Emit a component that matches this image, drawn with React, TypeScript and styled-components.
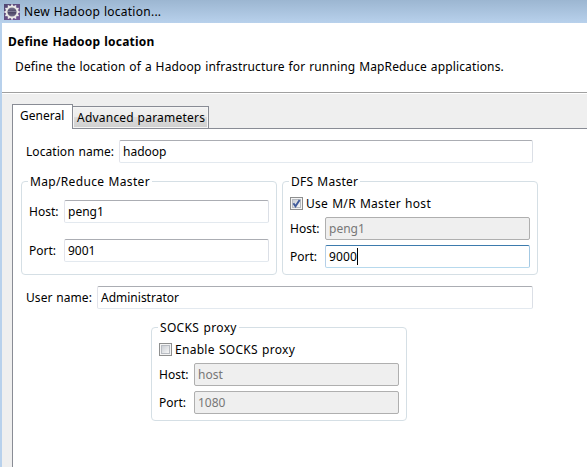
import React from "react";
import styled, { createGlobalStyle, css } from "styled-components";

const GlobalStyle = createGlobalStyle`
  *, *::before, *::after { box-sizing: border-box; }
  html, body { margin: 0; padding: 0; overflow: hidden; }
  body { background: #fff; }
`;

const Dialog = styled.div`
  width: 587px;
  height: 467px;
  display: flex;
  flex-direction: column;
  overflow: hidden;
  background: #b8d1ec;
  font: 12px/23px "Noto Sans", "Open Sans", sans-serif;
  color: #000;
`;

const TitleBar = styled.header`
  flex: none;
  height: 23px;
  padding-left: 4px;
  display: flex;
  align-items: center;
  gap: 4px;
  background: linear-gradient(#9cb6d1, #b8d1ec);
`;

const Text = styled.span<{ $track?: number; $word?: number; $bold?: boolean }>`
  white-space: nowrap;
  letter-spacing: ${(p) => p.$track ?? 0}px;
  word-spacing: ${(p) => p.$word ?? 0}px;
  font-weight: ${(p) => (p.$bold ? 700 : 400)};
`;

const Client = styled.div`
  flex: 1;
  margin-left: 2px;
  display: flex;
  flex-direction: column;
  background: #efefef;
`;

const Banner = styled.section`
  flex: none;
  height: 70px;
  padding: 7px 0 0 6px;
  display: flex;
  flex-direction: column;
  gap: 2px;
  background: #fff;
  border-bottom: 1px solid #a0a0a0;
`;

const Description = styled.div`
  padding-left: 7px;
`;

const TabFolder = styled.div`
  flex: 1;
  margin-left: 10px;
  display: flex;
  flex-direction: column;
`;

const Highlight = styled.div`
  flex: none;
  height: 1px;
  margin-bottom: 10px;
  margin-left: -10px;
  background: #fff;
`;

const TabRow = styled.div`
  flex: none;
  height: 25px;
  display: flex;
  align-items: flex-end;
`;

const Tab = styled.div<{ $active?: boolean }>`
  border: 1px solid #898c95;
  ${(p) =>
    p.$active
      ? css`
          width: 61px;
          height: 25px;
          padding-left: 7px;
          border-bottom: 0;
          background: #fff;
          line-height: 22px;
        `
      : css`
          width: 136px;
          height: 23px;
          padding-left: 4px;
          border-left: 0;
          line-height: 22px;
          background: linear-gradient(#f2f2f2 0%, #ebebeb 50%, #dcdcdc 50%, #cfcfcf 100%);
          box-shadow: inset 0 0 0 1px #f5f5f5;
        `}
`;

const TabRule = styled.div`
  flex: 1;
  border-bottom: 1px solid #898c95;
`;

const Panel = styled.form`
  flex: 1;
  padding: 11px 0 0 8px;
  border-left: 1px solid #898c95;
  background: #fff;
`;

const Field = styled.label<{ $label: number }>`
  display: grid;
  grid-template-columns: ${(p) => p.$label}px 1fr;
  height: 23px;
`;

const WideField = styled(Field)`
  width: 507px;
  margin-left: 5px;
`;

const Input = styled.input`
  width: 100%;
  min-width: 0;
  height: 23px;
  padding: 0 0 0 3px;
  outline: 0;
  border: 1px solid;
  border-color: #abadb3 #dbdfe6 #e3e9ef #e2e3ea;
  border-radius: 2px;
  background: #fff;
  color: #000;
  font: inherit;
  &:disabled {
    border-color: #afafaf;
    background: #efefef;
    color: #777;
  }
`;

const CaretInput = styled.div`
  display: flex;
  align-items: center;
  height: 23px;
  padding-left: 3px;
  border: 1px solid;
  border-color: #3d7bad #a4c9e3 #b7d9ed #b5cfe7;
  border-radius: 2px;
  background: #fff;
  line-height: 21px;
`;

const Caret = styled.i`
  width: 1px;
  height: 17px;
  background: #000;
`;

const Groups = styled.div`
  display: flex;
  gap: 5px;
  margin: 10px 0 11px;
  padding-top: 8px;
`;

const Group = styled.section`
  width: 256px;
  height: 94px;
  padding: 0 7px;
  border: 1px solid #d5dfe5;
  border-radius: 4px;
  display: flex;
  flex-direction: column;
`;

const ProxyRow = styled(Groups)`
  margin: 10px 0 0 130px;
`;

const Legend = styled.div`
  align-self: flex-start;
  height: 15px;
  margin: -8px 0 0 -1px;
  padding: 0 2px;
  line-height: 16px;
  background: #fff;
`;

const Body = styled.div<{ $top: number; $gap: number }>`
  display: flex;
  flex-direction: column;
  gap: ${(p) => p.$gap}px;
  margin-top: ${(p) => p.$top}px;
`;

const CheckRow = styled.div`
  display: flex;
  align-items: center;
  gap: 3px;
  height: 13px;
  margin-bottom: 2px;
`;

const Box = styled.span`
  width: 13px;
  height: 13px;
  padding: 1px;
  border: 1px solid #8e8f8f;
  background: #f4f4f4;
  display: flex;
`;

const BoxFace = styled.span`
  flex: 1;
  display: flex;
  border: 1px solid #b8bcc2;
  background: linear-gradient(135deg, #cbcfd5, #f6f6f6);
  svg {
    display: block;
    margin: -1px;
  }
`;

function Gear() {
  const teeth = Array.from({ length: 12 }, (_, i) => i * 30);
  return (
    <svg width="16" height="16" viewBox="0 0 16 16">
      <defs>
        <linearGradient id="back" x2="1" y2="1">
          <stop offset="0" stopColor="#514870" />
          <stop offset="1" stopColor="#745496" />
        </linearGradient>
        <linearGradient id="core" x2="0" y2="1">
          <stop offset="0" stopColor="#85839d" />
          <stop offset=".5" stopColor="#484161" />
          <stop offset="1" stopColor="#7e7794" />
        </linearGradient>
      </defs>
      <rect width="16" height="16" fill="url(#back)" />
      {teeth.map((a) => (
        <rect key={a} x="7.1" y=".4" width="1.8" height="3" fill="#efedf0" transform={`rotate(${a} 8 8)`} />
      ))}
      <circle cx="8" cy="8" r="5.5" fill="url(#core)" stroke="#e9e8e5" strokeWidth="1.9" />
      <path d="M4 7.5h8" stroke="#8f8ca5" strokeWidth=".7" />
    </svg>
  );
}

function CheckBox({ checked }: { checked?: boolean }) {
  return (
    <Box role="checkbox" aria-checked={!!checked}>
      <BoxFace>
        {checked && (
          <svg width="9" height="9" viewBox="0 0 9 9">
            <path d="M1.4 4.2 3.5 7.2 7.6 1" fill="none" stroke="#405b9b" strokeWidth="1.9" />
          </svg>
        )}
      </BoxFace>
    </Box>
  );
}

function HostField({ name, value, disabled }: { name: string; value: string; disabled?: boolean }) {
  return (
    <Field $label={35}>
      <Text>{name}</Text>
      <Input defaultValue={value} disabled={disabled} />
    </Field>
  );
}

export default function App() {
  return (
    <Dialog>
      <GlobalStyle />
      <TitleBar>
        <Gear />
        <Text $track={0.26} $word={0.4}>New Hadoop location...</Text>
      </TitleBar>
      <Client>
        <Banner>
          <Text $bold $track={0.22} $word={0.6}>Define Hadoop location</Text>
          <Description>
            <Text $track={0.14} $word={0.6}>
              Define the location of a Hadoop infrastructure for running MapReduce applications.
            </Text>
          </Description>
        </Banner>
        <TabFolder>
          <Highlight />
          <TabRow>
            <Tab $active><Text>General</Text></Tab>
            <Tab><Text $track={0.22} $word={0.3}>Advanced parameters</Text></Tab>
            <TabRule />
          </TabRow>
          <Panel>
            <WideField $label={93}>
              <Text $track={0.06} $word={0.6}>Location name:</Text>
              <Input defaultValue="hadoop" />
            </WideField>
            <Groups>
              <Group>
                <Legend><Text $track={0.33} $word={0.8}>Map/Reduce Master</Text></Legend>
                <Body $top={11} $gap={16}>
                  <HostField name="Host:" value="peng1" />
                  <HostField name="Port:" value="9001" />
                </Body>
              </Group>
              <Group>
                <Legend><Text $track={0.25} $word={0.6}>DFS Master</Text></Legend>
                <Body $top={8} $gap={5}>
                  <CheckRow>
                    <CheckBox checked />
                    <Text $track={0.3} $word={0.57}>Use M/R Master host</Text>
                  </CheckRow>
                  <HostField name="Host:" value="peng1" disabled />
                  <Field as="div" $label={35}>
                    <Text>Port:</Text>
                    <CaretInput>
                      <Text $track={0.1}>9000</Text>
                      <Caret />
                    </CaretInput>
                  </Field>
                </Body>
              </Group>
            </Groups>
            <WideField $label={71}>
              <Text $track={0.06} $word={0.6}>User name:</Text>
              <Input defaultValue="Administrator" />
            </WideField>
            <ProxyRow>
              <Group>
                <Legend><Text $track={0.33} $word={0.9}>SOCKS proxy</Text></Legend>
                <Body $top={8} $gap={5}>
                  <CheckRow>
                    <CheckBox />
                    <Text $track={0.28} $word={0.8}>Enable SOCKS proxy</Text>
                  </CheckRow>
                  <HostField name="Host:" value="host" disabled />
                  <HostField name="Port:" value="1080" disabled />
                </Body>
              </Group>
            </ProxyRow>
          </Panel>
        </TabFolder>
      </Client>
    </Dialog>
  );
}
